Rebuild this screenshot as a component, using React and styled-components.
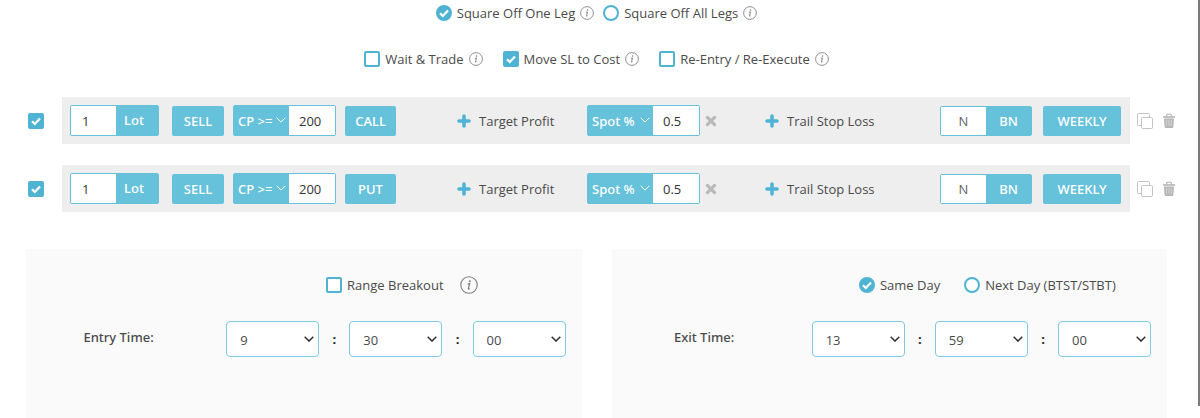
import { useId } from 'react';
import styled, { createGlobalStyle } from 'styled-components';

const hours = ['9', '10', '11', '12', '13', '14', '15'];
const minutes = ['00', '15', '30', '45', '59'];
const seconds = ['00', '15', '30', '45'];

// Open Sans has no medium weight here
const medium = `
font-family: 'Noto Sans', 'Open Sans', sans-serif;
font-weight: 500;
`;

const legs = [
  { id: 1, lots: '1', side: 'SELL', premium: '200', option: 'CALL', stop: '0.5', expiry: 'WEEKLY' },
  { id: 2, lots: '1', side: 'SELL', premium: '200', option: 'PUT', stop: '0.5', expiry: 'WEEKLY' },
];

export default function App() {
  return (
    <>
      <GlobalStyle />
      <Page>
        <Main>
          <Options>
            <OptionRow $gap="9px">
              <Choice type="radio" name="square" label="Square Off One Leg" info defaultChecked />
              <Choice type="radio" name="square" label="Square Off All Legs" info />
            </OptionRow>
            <OptionRow $gap="20px">
              <Choice type="checkbox" label="Wait & Trade" info />
              <Choice type="checkbox" label="Move SL to Cost" info defaultChecked />
              <Choice type="checkbox" label="Re-Entry / Re-Execute" info />
            </OptionRow>
          </Options>
          <Legs>
            {legs.map((leg) => <Leg key={leg.id} leg={leg} />)}
          </Legs>
          <Panels>
            <TimePanel title="Entry Time:" value={['9', '30', '00']}>
              <Choice type="checkbox" label="Range Breakout" />
              <InfoIcon size={18} />
            </TimePanel>
            <TimePanel title="Exit Time:" value={['13', '59', '00']} $gap="24px">
              <Choice type="radio" name="exitDay" label="Same Day" defaultChecked />
              <Choice type="radio" name="exitDay" label="Next Day (BTST/STBT)" />
            </TimePanel>
          </Panels>
        </Main>
        <ScrollThumb />
      </Page>
    </>
  );
}

function Choice({ label, info, ...input }) {
  return (
    <ChoiceBox>
      <ChoiceLabel>
        <Tick {...input} />
        {label}
      </ChoiceLabel>
      {info && <InfoIcon size={14} />}
    </ChoiceBox>
  );
}

function Leg({ leg }) {
  return (
    <LegRow>
      <Tick type="checkbox" aria-label={`Leg ${leg.id}`} defaultChecked />
      <LegBar>
        <Cluster>
          <Group>
            <GroupInput aria-label="Lots" defaultValue={leg.lots} $width="45px" $pad="11px" />
            <GroupLabel>Lot</GroupLabel>
          </Group>
          <Button $width="52px" $left="13px">{leg.side}</Button>
          <Group $left="9px">
            <SmallSelect label="Premium" value="CP >=" width="55px" />
            <GroupInput aria-label="Premium value" defaultValue={leg.premium} $width="46px" $pad="10px" />
          </Group>
          <Button $width="51px" $left="9px">{leg.option}</Button>
        </Cluster>
        <AddButton><PlusIcon />Target Profit</AddButton>
        <Cluster>
          <Group>
            <SmallSelect label="Stop loss type" value="Spot %" width="65px" />
            <GroupInput aria-label="Stop loss" defaultValue={leg.stop} $width="46px" $pad="10px" />
          </Group>
          <IconButton aria-label="Remove stop loss" $left="5px"><CrossIcon /></IconButton>
        </Cluster>
        <AddButton><PlusIcon />Trail Stop Loss</AddButton>
        <Cluster>
          <Toggle>
            <ToggleButton>N</ToggleButton>
            <ToggleButton $active>BN</ToggleButton>
          </Toggle>
          <Button $width="78px" $left="11px">{leg.expiry}</Button>
        </Cluster>
      </LegBar>
      <LegActions>
        <IconButton aria-label="Copy leg"><CopyIcon /></IconButton>
        <IconButton aria-label="Delete leg"><TrashIcon /></IconButton>
      </LegActions>
    </LegRow>
  );
}

function SmallSelect({ label, value, width }) {
  return (
    <SmallSelectBox $width={width}>
      <SmallSelectField aria-label={label} defaultValue={value}>
        <option>{value}</option>
      </SmallSelectField>
      <SmallChevron viewBox="0 0 10 6"><path d="M.7.8 5 5.1 9.3.8" /></SmallChevron>
    </SmallSelectBox>
  );
}

function TimePanel({ title, value, children, $gap = '16px' }) {
  const id = useId();
  const lists = [hours, minutes, seconds];
  return (
    <Panel>
      <PanelTitle id={id}>{title}</PanelTitle>
      <PanelBody>
        <PanelOptions $gap={$gap}>{children}</PanelOptions>
        <TimeRow role="group" aria-labelledby={id}>
          {lists.map((list, i) => (
            <TimePart key={i}>
              {i > 0 && <Colon>:</Colon>}
              <TimeSelectBox>
                <TimeSelect aria-label={['Hours', 'Minutes', 'Seconds'][i]} defaultValue={value[i]}>
                  {list.map((item) => <option key={item}>{item}</option>)}
                </TimeSelect>
                <TimeChevron viewBox="0 0 10 6"><path d="M.7.8 5 5.1 9.3.8" /></TimeChevron>
              </TimeSelectBox>
            </TimePart>
          ))}
        </TimeRow>
      </PanelBody>
    </Panel>
  );
}

function InfoIcon({ size }) {
  return (
    <InfoSvg width={size} height={size} viewBox="0 0 16 16" aria-hidden="true">
      <circle cx="8" cy="8" r="7.3" fill="none" stroke="currentColor" strokeWidth="1" />
      <circle cx="8.7" cy="4.6" r="0.9" fill="currentColor" />
      <path d="M6.8 7.2 8.6 6.8 7.4 11.3c-.1.5.3.5 1.2-.2" fill="none" stroke="currentColor" strokeWidth="1.1" />
    </InfoSvg>
  );
}

function PlusIcon() {
  return (
    <svg width="14" height="14" viewBox="0 0 14 14" aria-hidden="true">
      <path d="M7 2v10M2 7h10" stroke="#4fb3d3" strokeWidth="3.6" strokeLinecap="round" />
    </svg>
  );
}

function CrossIcon() {
  return (
    <svg width="12" height="12" viewBox="0 0 12 12" aria-hidden="true">
      <path d="m2.4 2.4 7.2 7.2m0-7.2L2.4 9.6" stroke="#b9b9b9" strokeWidth="3.2" strokeLinecap="round" />
    </svg>
  );
}

function CopyIcon() {
  return (
    <svg width="16" height="16" viewBox="0 0 16 16" fill="none" stroke="#c4c4c4" aria-hidden="true">
      <rect x="4.5" y="4.5" width="11" height="11" rx="1" />
      <path d="M4.5 12.5h-3a1 1 0 0 1-1-1v-10a1 1 0 0 1 1-1h10a1 1 0 0 1 1 1v3" />
    </svg>
  );
}

function TrashIcon() {
  return (
    <svg width="12" height="16" viewBox="0 0 12 16" aria-hidden="true">
      <path d="M3.6 3.4V2.6Q3.6 1 6 1t2.4 1.6v.8" fill="none" stroke="#b5b5b5" strokeWidth="1.2" />
      <path d="M0 3.2h12v1.6H0z" fill="#b5b5b5" />
      <path d="M1 5.4h10l-.6 8.4q-.1 1.2-1.2 1.2H2.8q-1.1 0-1.2-1.2z" fill="#b5b5b5" />
      <path d="M3.7 6.8v6.4M6 6.8v6.4M8.3 6.8v6.4" stroke="#dedede" strokeWidth="0.8" />
    </svg>
  );
}

const GlobalStyle = createGlobalStyle`
* {
  box-sizing: border-box;
}

body {
  margin: 0;
  background: #fff;
  color: #4a4a4a;
}

body, button, input, select {
  font-family: 'Open Sans', 'Noto Sans', sans-serif;
  font-size: 13px;
}

button, select {
  cursor: pointer;
}
`;

const Page = styled.div`
display: flex;
min-height: 100vh;
`;

const Main = styled.main`
flex: 1;
display: flex;
flex-direction: column;
`;

const ScrollThumb = styled.div`
width: 2px;
margin-bottom: 12px;
background: #7b7b7b;
`;

const Options = styled.div`
display: flex;
flex-direction: column;
gap: 26px;
padding: 3px 31px 0 26px;
`;

const OptionRow = styled.div`
display: flex;
justify-content: center;
gap: ${(p) => p.$gap};
`;

const ChoiceBox = styled.div`
display: flex;
align-items: center;
gap: 5px;
`;

const ChoiceLabel = styled.label`
display: flex;
align-items: center;
gap: 5px;
line-height: 20px;
cursor: pointer;
`;

const Tick = styled.input`
appearance: none;
flex: none;
width: 16px;
height: 16px;
margin: 0;
border: 2px solid #4fb3d3;
border-radius: ${(p) => (p.type === 'radio' ? '50%' : '2px')};
background: #fff;
cursor: pointer;

&:checked {
  background: #4fb3d3 url("data:image/svg+xml,%3Csvg xmlns='http://www.w3.org/2000/svg' viewBox='0 0 12 12'%3E%3Cpath d='M2 6.2 4.8 9 10 3.4' fill='none' stroke='white' stroke-width='2.2'/%3E%3C/svg%3E") center / 12px no-repeat;
}
`;

const InfoSvg = styled.svg`
flex: none;
color: #808080;
`;

const Legs = styled.div`
display: flex;
flex-direction: column;
gap: 21px;
padding: 28px 23px 0 28px;
`;

const LegRow = styled.div`
display: flex;
align-items: center;
`;

const LegBar = styled.div`
flex: 1;
display: grid;
grid-template-columns: 387fr 130fr 178fr 175fr auto;
align-items: center;
margin: 0 7px 0 18px;
padding: 8px 9px 8px 8px;
background: #eee;
`;

const LegActions = styled.div`
display: flex;
align-items: center;
gap: 10px;
`;

const Cluster = styled.div`
display: flex;
align-items: center;
`;

const Group = styled.div`
display: flex;
height: 31px;
margin-left: ${(p) => p.$left || 0};
border: 1px solid #66c1db;
border-radius: 2px;
background: #66c1db;
`;

const GroupInput = styled.input`
width: ${(p) => p.$width};
padding: 0 0 0 ${(p) => p.$pad};
border: 0;
background: #fff;
color: #333;
`;

const GroupLabel = styled.span`
${medium}
width: 42px;
padding-left: 8px;
color: #fff;
line-height: 29px;
`;

const Button = styled.button`
${medium}
width: ${(p) => p.$width};
height: 30px;
margin-left: ${(p) => p.$left};
padding: 0;
border: 0;
border-radius: 2px;
background: #66c1db;
color: #fff;
`;

const SmallSelectBox = styled.div`
display: grid;
grid-template-columns: 1fr auto;
align-items: center;
width: ${(p) => p.$width};
`;

const SmallSelectField = styled.select`
${medium}
appearance: none;
grid-row: 1;
grid-column: 1 / -1;
width: 100%;
height: 100%;
padding: 0 0 0 4px;
border: 0;
background: transparent;
color: #fff;

option {
  color: #333;
}
`;

const Chevron = styled.svg`
grid-row: 1;
grid-column: 2;
width: 10px;
height: 6px;
fill: none;
pointer-events: none;
`;

const SmallChevron = styled(Chevron)`
margin: 0 3px 2px 0;
stroke: #fff;
`;

const AddButton = styled.button`
display: flex;
align-items: center;
gap: 8px;
padding: 0;
border: 0;
background: none;
color: #4a4a4a;
white-space: nowrap;
`;

const IconButton = styled.button`
display: flex;
margin-left: ${(p) => p.$left || 0};
padding: 0;
border: 0;
background: none;
`;

const Toggle = styled.div`
display: flex;
height: 30px;
border: 1px solid #66c1db;
border-radius: 2px;
background: #fff;
`;

const ToggleButton = styled.button`
width: 45px;
padding: 0;
border: 0;
background: ${(p) => (p.$active ? '#66c1db' : '#fff')};
color: ${(p) => (p.$active ? '#fff' : '#666')};
${(p) => p.$active && medium}
`;

const Panels = styled.div`
flex: 1;
display: grid;
grid-template-columns: 1fr 1fr;
gap: 30px;
padding: 37px 31px 0 26px;
`;

const Panel = styled.section`
display: grid;
grid-template-columns: 1fr 2fr;
align-content: start;
padding: 26px 0 20px;
background: #fafafa;
`;

const PanelTitle = styled.div`
${medium}
margin-top: 52px;
line-height: 20px;
text-align: center;
`;

const PanelBody = styled.div`
padding: 0 16px 0 15px;
`;

const PanelOptions = styled.div`
display: flex;
align-items: center;
justify-content: center;
gap: ${(p) => p.$gap};
padding-left: 12px;
`;

const TimeRow = styled.div`
display: flex;
justify-content: space-between;
margin-top: 26px;
`;

const TimePart = styled.div`
display: flex;
align-items: center;
`;

const Colon = styled.span`
width: 30px;
color: #222;
font-weight: 700;
text-align: center;
`;

const TimeSelectBox = styled.div`
display: grid;
grid-template-columns: 1fr auto;
align-items: center;
width: 93px;
`;

const TimeSelect = styled.select`
appearance: none;
grid-row: 1;
grid-column: 1 / -1;
height: 36px;
padding: 2px 0 0 13px;
border: 1px solid #7ccbe2;
border-radius: 4px;
background: #fff;
color: #4a4a4a;
`;

const TimeChevron = styled(Chevron)`
margin-right: 5px;
stroke: #333;
stroke-width: 1.5;
`;
